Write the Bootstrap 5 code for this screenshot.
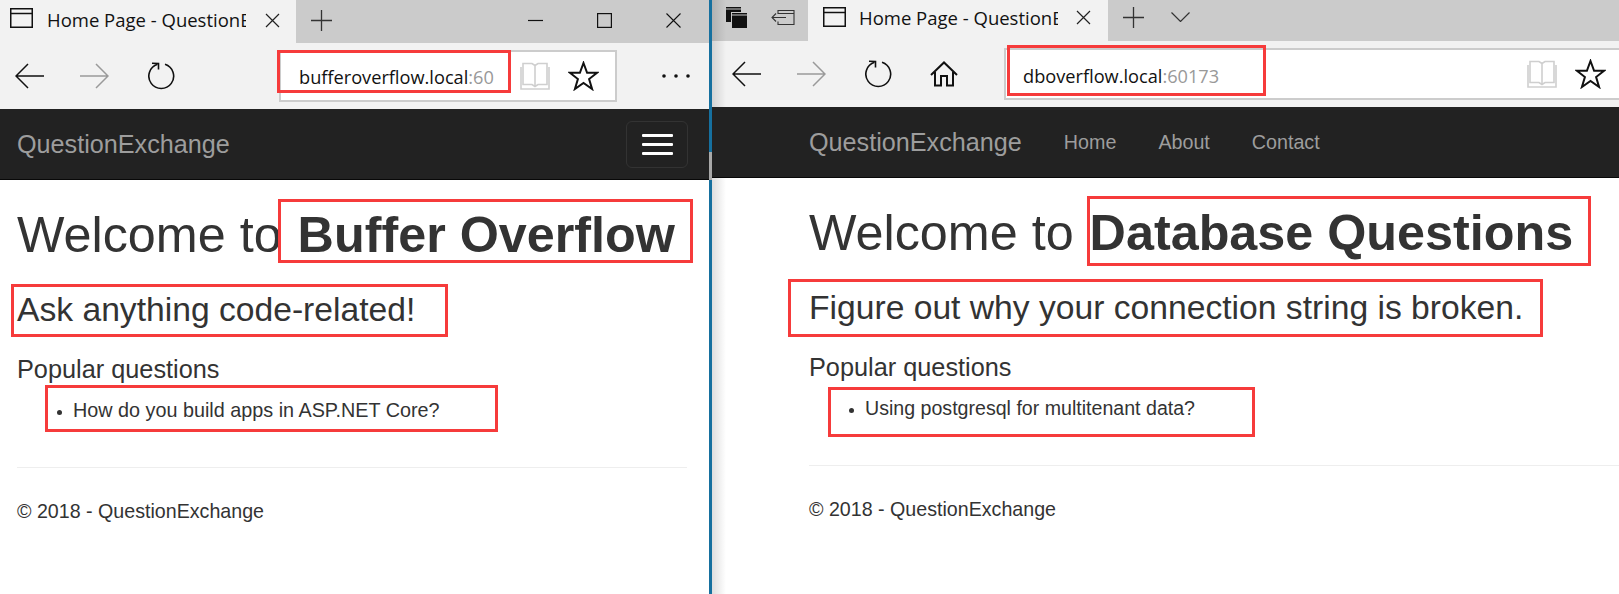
<!DOCTYPE html>
<html lang="en">
<head>
<meta charset="utf-8">
<title>Home Page - QuestionExchange</title>
<link rel="stylesheet" href="https://cdn.jsdelivr.net/npm/bootstrap@5.3.0/dist/css/bootstrap.min.css">
<style>
html,body{height:100%;overflow:hidden}
body{background:#fff;font-family:"Liberation Sans",Arial,sans-serif;color:#333}
.shot{height:594px;width:1619px}
.win{position:relative;overflow:hidden;height:594px;flex:none}
.win-a{width:709px}
.win-b{width:907px}
.split{width:3px;flex:none;background:linear-gradient(to bottom,#16709f 0,#16709f 152px,#a9a9a9 152px,#a9a9a9 180px,#16709f 180px,#16709f 100%)}
.strip{background:#cbcbcb;font-family:"Open Sans",sans-serif}
.win-a .strip{height:43px}
.win-b .strip{height:41px;padding-left:14px}
.tabbox{background:#f2f2f2;height:100%;color:#111;font-size:18.5px;white-space:nowrap}
.win-a .tabbox{width:296px;padding:0 0 3px 10px}
.win-b .tabbox{width:300px;margin-left:13px;padding:0 0 6px 15px}
.win-a .tabbox>svg:first-child{margin-bottom:5px}
.win-b .tabbox>svg:first-child{margin-bottom:1px}
.win-b .strip>svg{margin-bottom:7px}
.tabname{width:199px;overflow:hidden;margin-left:14px}
.win-b .tabname{margin-left:13px}
.tabx{margin-left:19px}
.win-b .tabx{margin-left:18px}
.plus-a{margin:0 0 3px 15px}
.plus-b{margin-left:15px}
.chev{margin-left:27px}
.sys{margin-left:auto;margin-bottom:3px}
.sys svg{margin-right:54px}
.sys svg:last-child{margin-right:28px}
.side2{margin-left:24px}
.tools{background:#f2f2f2;height:66px;font-family:"Open Sans",sans-serif}
.win-a .tools{padding-left:15px}
.win-b .tools{padding-left:20px}
.fwd{margin-left:36px}
.rel{margin-left:39px}
.hom{margin-left:38px}
.addr{background:#fff;border:2px solid #ccc;height:52px;font-size:18.2px;color:#111;white-space:nowrap;overflow:hidden;flex:none}
.win-a .addr{width:338px;margin-left:104px;padding-left:18px}
.win-b .addr{width:640px;margin-left:46px;padding-left:17px}
.port{color:#999}
.url{width:196px;overflow:hidden;padding-top:4px}
.win-b .url{width:auto;padding-top:6px}
.book{margin-left:auto}
.star{margin:0 16px 0 18px}
.win-b .star{margin-right:36px}
.dots{margin-left:45px}
.navbar.topbar{background:#222;height:71px;border-bottom:1px solid #080808;padding:0;flex-wrap:nowrap}
.win-a .topbar{padding-left:17px;padding-right:21px}
.win-b .topbar{padding-left:97px;justify-content:flex-start}
.topbar .navbar-brand{color:#9d9d9d;font-size:25.2px;margin:0;padding:2px 0 0}
.topbar .nav-link{color:#9d9d9d;font-size:19.7px;padding:2px 0 0;margin-left:42px}
.menu-btn{width:62px;height:47px;border:1px solid #333;border-radius:6px;background:transparent;padding:0;gap:6px}
.menu-btn i{display:block;width:31px;height:3px;background:#fff;border-radius:1px}
.pane{padding-top:27px}
.win-a .pane{padding-left:17px;padding-right:22px}
.win-b .pane{padding-left:97px;padding-right:0}
.pane h1{font-size:50.3px;line-height:56px;font-weight:400;margin:0 0 26px;white-space:nowrap;color:#333}
.pane h1 b{margin-left:2px}
.pane h2{font-size:33.65px;line-height:42px;font-weight:400;margin:0 0 23px;white-space:nowrap;color:#333}
.pane h3{font-size:25.3px;line-height:30px;font-weight:400;margin:0 0 13px;color:#333}
.pane ul{font-size:19.8px;line-height:26px;margin:0;padding-left:56px;height:70px}
.win-b .pane ul{font-size:19.6px}
.pane li::marker{font-size:.8em}
.pane hr{border:0;border-top:1px solid #eee;opacity:1;margin:0 0 30px}
.pane footer{font-size:19.65px;line-height:26px}
.mark-box{position:absolute;border:3px solid #f63b3b;pointer-events:none}
.a1{left:277px;top:50px;width:234px;height:43px}
.a2{left:278px;top:199px;width:415px;height:64px}
.a3{left:11px;top:284px;width:437px;height:53px}
.a4{left:45px;top:385px;width:453px;height:47px}
.b1{left:295px;top:45px;width:259px;height:51px}
.b2{left:375px;top:196px;width:504px;height:70px}
.b3{left:76px;top:279px;width:755px;height:58px}
.b4{left:116px;top:387px;width:427px;height:50px}
.fade-edge{position:absolute;left:0;top:0;bottom:0;width:14px;background:linear-gradient(to right,rgba(0,0,0,.13),rgba(0,0,0,0));pointer-events:none}
.win-b .topbar{position:relative;z-index:1}
svg{flex:none;display:block}
</style>
</head>
<body>
<div class="shot d-flex">
  <section class="win win-a">
    <div class="strip d-flex align-items-center">
      <div class="tabbox d-flex align-items-center">
        <svg width="23" height="20" viewBox="0 0 23 20" fill="none" stroke="#111" stroke-width="1.5"><rect x=".75" y=".75" width="21.5" height="18.5"/><path d="M1 5.5h21"/></svg>
        <span class="tabname">Home Page - QuestionExchange</span>
        <svg class="tabx" width="15" height="15" viewBox="0 0 15 15" stroke="#222" stroke-width="1.2"><path d="M1 1l13 13M14 1L1 14"/></svg>
      </div>
      <svg class="plus-a" width="21" height="21" viewBox="0 0 21 21" stroke="#333" stroke-width="1.3"><path d="M10.5 0v21M0 10.5h21"/></svg>
      <div class="sys d-flex align-items-center">
        <svg width="15" height="15" viewBox="0 0 15 15" stroke="#111" stroke-width="1.2"><path d="M0 7.5h15"/></svg>
        <svg width="15" height="15" viewBox="0 0 15 15" fill="none" stroke="#111" stroke-width="1.2"><rect x=".6" y=".6" width="13.8" height="13.8"/></svg>
        <svg width="15" height="15" viewBox="0 0 15 15" stroke="#111" stroke-width="1.1"><path d="M.5.5l14 14M14.5.5l-14 14"/></svg>
      </div>
    </div>
    <div class="tools d-flex align-items-center">
      <svg width="29" height="26" viewBox="0 0 29 26" fill="none" stroke="#111" stroke-width="1.5"><path d="M1 13h28M13 1L1 13l12 12"/></svg>
      <svg class="fwd" width="29" height="26" viewBox="0 0 29 26" fill="none" stroke="#9a9a9a" stroke-width="1.5"><path d="M0 13h28M16 1l12 12-12 12"/></svg>
      <svg class="rel" width="27" height="28" viewBox="0 0 27 28" fill="none" stroke="#111" stroke-width="1.6"><path d="M17 2.3A12.4 12.4 0 1 1 9.500 2.300"/><path d="M4 1.200l6.500.3v6"/></svg>
      <div class="addr d-flex align-items-center">
        <div class="url">bufferoverflow.local<span class="port">:60</span></div>
        <svg class="book" width="30" height="28" viewBox="0 0 30 28" fill="none" stroke="#cfcfcf" stroke-width="1.6"><path d="M3 1.500h9l3 2 3-2h9v21h-9l-3 2-3-2H3zM15 3.500v21M1 5v22h28V5"/></svg>
        <svg class="star" width="31" height="30" viewBox="0 0 31 30" fill="none" stroke="#111" stroke-width="2"><path d="M15.500 2l3.600 9.800h10l-8 6.200 3 10-8.600-6-8.600 6 3-10-8-6.200h10z"/></svg>
      </div>
      <svg class="dots" width="28" height="4" viewBox="0 0 28 4" fill="#111"><circle cx="2" cy="2" r="1.800"/><circle cx="14" cy="2" r="1.800"/><circle cx="26" cy="2" r="1.800"/></svg>
    </div>
    <nav class="navbar topbar justify-content-between">
      <a class="navbar-brand" href="#">QuestionExchange</a>
      <button class="menu-btn d-flex flex-column align-items-center justify-content-center" type="button" aria-label="Toggle navigation"><i></i><i></i><i></i></button>
    </nav>
    <main class="pane">
      <h1>Welcome to <b>Buffer Overflow</b></h1>
      <h2>Ask anything code-related!</h2>
      <h3>Popular questions</h3>
      <ul><li>How do you build apps in ASP.NET Core?</li></ul>
      <hr>
      <footer>© 2018 - QuestionExchange</footer>
    </main>
    <div class="mark-box a1"></div><div class="mark-box a2"></div><div class="mark-box a3"></div><div class="mark-box a4"></div>
  </section>
  <div class="split"></div>
  <section class="win win-b">
    <div class="strip d-flex align-items-center">
      <svg width="21" height="21" viewBox="0 0 21 21" fill="#111"><path d="M0 0h15v1.500H0zM0 2.500h15V5H5v10H0z"/><path d="M6 6h15v1.500H6zM6 8.500h15V21H6z"/></svg>
      <svg class="side2" width="24" height="15" viewBox="0 0 24 15" fill="none" stroke="#333" stroke-width="1.100"><path d="M7 4V.5h16v14H7v-3M7 3.500h16M1 7.500h14M5 3.500l-4 4 4 4"/></svg>
      <div class="tabbox d-flex align-items-center">
        <svg width="23" height="20" viewBox="0 0 23 20" fill="none" stroke="#111" stroke-width="1.5"><rect x=".75" y=".75" width="21.5" height="18.5"/><path d="M1 5.500h21"/></svg>
        <span class="tabname">Home Page - QuestionExchange</span>
        <svg class="tabx" width="15" height="15" viewBox="0 0 15 15" stroke="#222" stroke-width="1.2"><path d="M1 1l13 13M14 1L1 14"/></svg>
      </div>
      <svg class="plus-b" width="21" height="21" viewBox="0 0 21 21" stroke="#333" stroke-width="1.3"><path d="M10.500 0v21M0 10.500h21"/></svg>
      <svg class="chev" width="19" height="10" viewBox="0 0 19 10" fill="none" stroke="#333" stroke-width="1.200"><path d="M.5.500l9 9 9-9"/></svg>
    </div>
    <div class="tools d-flex align-items-center">
      <svg width="29" height="26" viewBox="0 0 29 26" fill="none" stroke="#111" stroke-width="1.5"><path d="M1 13h28M13 1L1 13l12 12"/></svg>
      <svg class="fwd" width="29" height="26" viewBox="0 0 29 26" fill="none" stroke="#9a9a9a" stroke-width="1.5"><path d="M0 13h28M16 1l12 12-12 12"/></svg>
      <svg class="rel" width="27" height="28" viewBox="0 0 27 28" fill="none" stroke="#111" stroke-width="1.6"><path d="M17 2.300A12.400 12.400 0 1 1 9.500 2.300"/><path d="M4 1.200l6.500.3v6"/></svg>
      <svg class="hom" width="28" height="26" viewBox="0 0 28 26" fill="none" stroke="#111" stroke-width="2"><path d="M1 14L14 1.500 27 14M5 11v13.500h6V15h6v9.500h6V11"/></svg>
      <div class="addr d-flex align-items-center">
        <div class="url">dboverflow.local<span class="port">:60173</span></div>
        <svg class="book" width="30" height="28" viewBox="0 0 30 28" fill="none" stroke="#cfcfcf" stroke-width="1.6"><path d="M3 1.500h9l3 2 3-2h9v21h-9l-3 2-3-2H3zM15 3.500v21M1 5v22h28V5"/></svg>
        <svg class="star" width="31" height="30" viewBox="0 0 31 30" fill="none" stroke="#111" stroke-width="2"><path d="M15.500 2l3.600 9.800h10l-8 6.200 3 10-8.600-6-8.600 6 3-10-8-6.200h10z"/></svg>
      </div>
    </div>
    <nav class="navbar topbar">
      <a class="navbar-brand" href="#">QuestionExchange</a>
      <div class="nav">
        <a class="nav-link" href="#">Home</a>
        <a class="nav-link" href="#">About</a>
        <a class="nav-link" href="#">Contact</a>
      </div>
    </nav>
    <main class="pane">
      <h1>Welcome to <b>Database Questions</b></h1>
      <h2>Figure out why your connection string is broken.</h2>
      <h3>Popular questions</h3>
      <ul><li>Using postgresql for multitenant data?</li></ul>
      <hr>
      <footer>© 2018 - QuestionExchange</footer>
    </main>
    <div class="fade-edge"></div>
    <div class="mark-box b1"></div><div class="mark-box b2"></div><div class="mark-box b3"></div><div class="mark-box b4"></div>
  </section>
</div>
<script src="https://cdn.jsdelivr.net/npm/bootstrap@5.3.0/dist/js/bootstrap.bundle.min.js"></script>
</body>
</html>
